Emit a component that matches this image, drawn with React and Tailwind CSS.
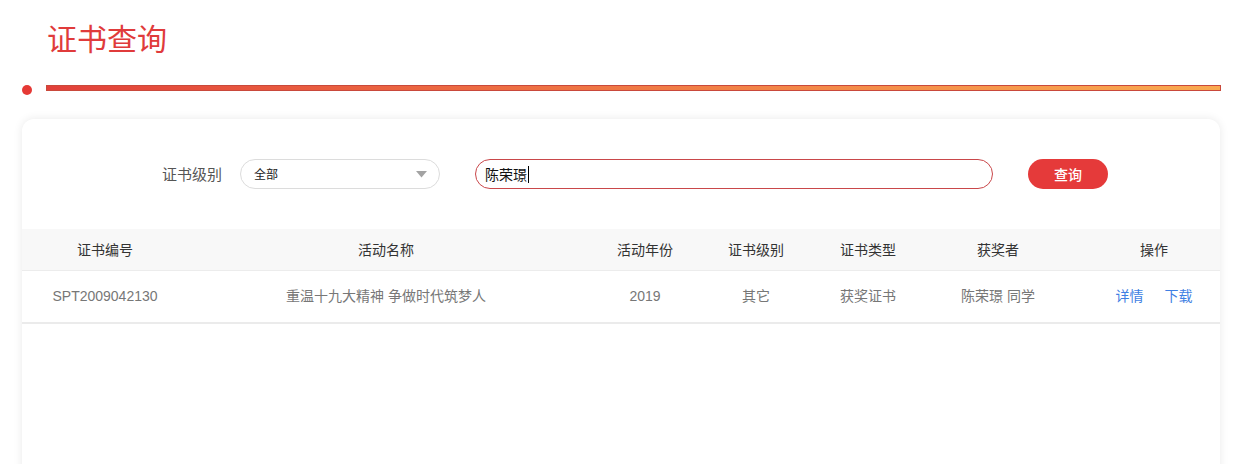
const COLS = 'grid grid-cols-[166px_402px_110px_112px_112px_148px_150px]';

const HEADERS = ['证书编号', '活动名称', '活动年份', '证书级别', '证书类型', '获奖者', '操作'];

const ROWS = [
  {
    id: 'SPT2009042130',
    name: '重温十九大精神 争做时代筑梦人',
    year: '2019',
    level: '其它',
    type: '获奖证书',
    winner: '陈荣璟 同学',
  },
];

function cellPad(i) {
  if (i === 1) return 'pr-[6px]';
  if (i === 6) return 'pl-[14px]';
  return '';
}

export default function App() {
  return (
    <div className="w-[1242px] h-[464px] bg-white overflow-hidden font-['Liberation_Sans','Noto_Sans_CJK_SC',sans-serif]">
      {/* page title */}
      <div className="pl-[47px] pt-[17px] h-[74px]">
        <h1 className="text-[30px] leading-[40px] text-[#e03b3b] font-['Noto_Sans_CJK_SC',sans-serif]">证书查询</h1>
      </div>

      {/* divider with dot */}
      <div className="flex items-center h-[28px] pl-[22px] pr-[21px] mt-[1px]">
        <span className="w-[10px] h-[10px] rounded-full bg-[#e53935] flex-shrink-0 mt-[1px]" />
        <span className="ml-[14px] flex-1 h-[6px] bg-gradient-to-r from-[#e2403a] to-[#f9a94f] border border-[#c9493b] -mt-[3px]" />
      </div>

      {/* card */}
      <div className="mx-[22px] mt-[16px] h-[400px] bg-white rounded-[12px] shadow-[0_0_10px_rgba(0,0,0,0.09)]">
        <div className="flex items-center pt-[40px] pb-[40px]">
          <span className="ml-[140px] text-[15px] text-[#555] font-['Noto_Sans_CJK_SC',sans-serif]">证书级别</span>
          <div className="ml-[18px] w-[200px] h-[30px] rounded-full border border-[#dcdcdc] flex items-center justify-between pl-[13px] pr-[12px]">
            <span className="text-[12px] text-[#222] font-['Noto_Sans_CJK_SC',sans-serif]">全部</span>
            <svg width="11" height="7" viewBox="0 0 11 7">
              <path d="M0 0 L11 0 L5.5 6.5 Z" fill="#a3a3a3" />
            </svg>
          </div>
          <div className="ml-[35px] w-[518px] h-[30px] rounded-full border border-[#c9474a] flex items-center pl-[9px]">
            <span className="text-[14px] text-[#111] font-['Noto_Sans_CJK_SC',sans-serif]">陈荣璟</span>
            <span className="w-px h-[17px] bg-black ml-[1px]" />
          </div>
          <button className="ml-[35px] w-[80px] h-[30px] rounded-full bg-[#e53a3a] text-white text-[14px] font-medium font-['Noto_Sans_CJK_SC',sans-serif]">
            查询
          </button>
        </div>

        {/* table */}
        <div className={`${COLS} h-[42px] bg-[#f8f8f8] border-b border-[#ececec] items-center text-[14px] text-[#333] font-['Noto_Sans_CJK_SC',sans-serif]`}>
          {HEADERS.map((h, i) => (
            <div key={h} className={`text-center ${cellPad(i)}`}>{h}</div>
          ))}
        </div>
        {ROWS.map((r) => (
          <div key={r.id} className={`${COLS} h-[53px] border-b-2 border-[#ebebeb] items-center text-[14px] text-[#777]`}>
            <div className="text-center">{r.id}</div>
            <div className="text-center pr-[6px]">{r.name}</div>
            <div className="text-center">{r.year}</div>
            <div className="text-center">{r.level}</div>
            <div className="text-center">{r.type}</div>
            <div className="text-center">{r.winner}</div>
            <div className="flex justify-center gap-[21px] pl-[14px] text-[#3f7fe3]">
              <a href="#">详情</a>
              <a href="#">下载</a>
            </div>
          </div>
        ))}
      </div>
    </div>
  );
}
